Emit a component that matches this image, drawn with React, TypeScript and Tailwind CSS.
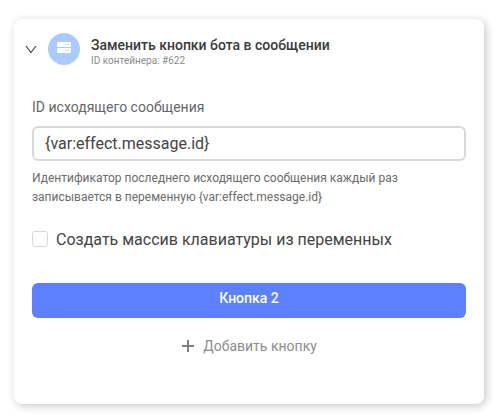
import { useState } from 'react';

function ServerIcon() {
  return (
    <svg width="16" height="12" viewBox="0 0 16 12" className="mb-0.5">
      <rect x="1" y="0" width="14" height="5" rx="1" fill="#fff" />
      <rect x="1" y="6" width="14" height="5" rx="1" fill="#fff" />
      <path d="M9.5 2.5h1.5M12 2.5h1M9.5 8.5h1.5M12 8.5h1" stroke="#abcbff" strokeWidth="1" />
    </svg>
  );
}

export default function App() {
  const [messageId, setMessageId] = useState('{var:effect.message.id}');
  const [fromVariables, setFromVariables] = useState(false);

  return (
    <div className="h-[416px] w-[499px] overflow-hidden bg-white pt-[19px] pl-[14px] font-['Roboto','Liberation_Sans',sans-serif]">
      <section className="h-[385px] w-[470px] rounded-lg bg-white px-[18px] pt-[14px] shadow-[2px_2px_8px_rgba(0,0,0,0.22)]">
        {/* Header */}
        <header className="-ml-[7px] flex h-8 items-center">
          <svg width="12" height="9" viewBox="0 0 12 9" fill="none" stroke="#444" strokeWidth="1.2">
            <path d="M1 1l5 6.5L11 1" />
          </svg>
          <div className="ml-[11px] flex size-8 items-center justify-center rounded-full bg-[#abcbff]">
            <ServerIcon />
          </div>
          <div className="ml-[11px] pt-[5px]">
            <h2 className="text-[14px] leading-[17px] font-medium text-[#3a3a3a]">Заменить кнопки бота в сообщении</h2>
            <p className="text-[10px] leading-[13px] text-[#8c8c8c]">ID контейнера: #622</p>
          </div>
        </header>

        <label className="mt-8 block text-[14px] leading-5 text-[#666]" htmlFor="message-id">
          ID исходящего сообщения
        </label>
        <input
          id="message-id"
          type="text"
          value={messageId}
          onChange={e => setMessageId(e.target.value)}
          className="mt-[9px] block h-[35px] w-[434px] rounded-md border-2 border-[#d9d9d9] px-[11px] text-base text-[#444] outline-none"
        />
        <p className="mt-2 text-[12px] leading-[19px] text-[#6b6b6b]">
          Идентификатор последнего исходящего сообщения каждый раз
          <br />
          записывается в переменную {'{var:effect.message.id}'}
        </p>

        <label className="mt-5 flex h-6 items-center gap-2 text-base text-[#444]">
          <input
            type="checkbox"
            checked={fromVariables}
            onChange={e => setFromVariables(e.target.checked)}
            className="size-4 appearance-none rounded-[3px] border border-[#d9d9d9] bg-white checked:bg-[#5c80ff]"
          />
          <span className="pt-0.5">Создать массив клавиатуры из переменных</span>
        </label>

        {/* Keyboard buttons */}
        <button
          type="button"
          className="mt-8 block h-[35px] w-[434px] rounded-md bg-[#5c80ff] pb-1 text-[14px] font-medium text-white"
        >
          Кнопка 2
        </button>
        <button
          type="button"
          className="mt-[18px] flex h-5 w-[434px] items-center justify-center gap-[9px] pl-px text-[14px] text-[#8c8c8c]"
        >
          <svg width="12" height="12" viewBox="0 0 12 12" stroke="#808080" strokeWidth="2">
            <path d="M6 0v12M0 6h12" />
          </svg>
          Добавить кнопку
        </button>
      </section>
    </div>
  );
}
